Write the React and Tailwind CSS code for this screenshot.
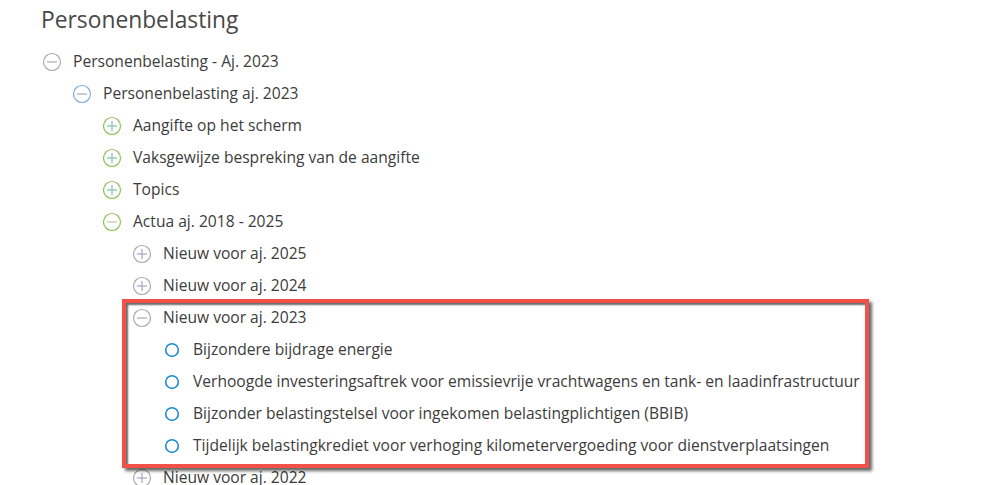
import React from "react";

function ToggleIcon({ type, color, lineColor }) {
  return (
    <svg width="20" height="20" viewBox="0 0 20 20" className="shrink-0">
      <circle cx="10" cy="10" r="8.5" fill="none" stroke={color} strokeWidth="1.2" />
      <line x1="5" y1="10" x2="15" y2="10" stroke={lineColor || color} strokeWidth="1.2" />
      {type === "plus" && (
        <line x1="10" y1="5" x2="10" y2="15" stroke={lineColor || color} strokeWidth="1.2" />
      )}
    </svg>
  );
}

function LeafIcon() {
  return (
    <svg width="20" height="20" viewBox="0 0 20 20" className="shrink-0">
      <circle cx="10" cy="10" r="6.3" fill="none" stroke="#1d8ad6" strokeWidth="1.6" />
    </svg>
  );
}

const indent = ["pl-[42px]", "pl-[72px]", "pl-[102px]", "pl-[132px]", "pl-[162px]"];

function Row({ level, icon, children }) {
  return (
    <div className={`h-8 flex items-center gap-[11px] ${indent[level]}`}>
      {icon}
      <span className="whitespace-nowrap">{children}</span>
    </div>
  );
}

const gray = "#a9a9a9";
const green = "#8cc152";

export default function App() {
  return (
    <div className="w-[1006px] h-[485px] overflow-hidden bg-white text-[#3c3c3c] font-['Open_Sans',sans-serif] text-[15.6px]">
      <h1 className="pl-[41px] pt-[4px] h-[46px] text-[22.8px] leading-[32px] text-[#484848]">
        Personenbelasting
      </h1>

      <Row level={0} icon={<ToggleIcon type="minus" color={gray} />}>
        Personenbelasting - Aj. 2023
      </Row>
      <Row level={1} icon={<ToggleIcon type="minus" color="#7ea7dc" lineColor="#a3abb6" />}>
        Personenbelasting aj. 2023
      </Row>
      <Row level={2} icon={<ToggleIcon type="plus" color={green} lineColor="#7fc2a0" />}>
        Aangifte op het scherm
      </Row>
      <Row level={2} icon={<ToggleIcon type="plus" color={green} lineColor="#7fc2a0" />}>
        Vaksgewijze bespreking van de aangifte
      </Row>
      <Row level={2} icon={<ToggleIcon type="plus" color={green} lineColor="#7fc2a0" />}>
        Topics
      </Row>
      <Row level={2} icon={<ToggleIcon type="minus" color={green} lineColor="#b9c89e" />}>
        Actua aj. 2018 - 2025
      </Row>
      <Row level={3} icon={<ToggleIcon type="plus" color={gray} lineColor="#9fa8c4" />}>
        Nieuw voor aj. 2025
      </Row>
      <Row level={3} icon={<ToggleIcon type="plus" color={gray} lineColor="#9fa8c4" />}>
        Nieuw voor aj. 2024
      </Row>

      {/* highlighted group */}
      <div className="relative">
        <Row level={3} icon={<ToggleIcon type="minus" color={gray} />}>
          Nieuw voor aj. 2023
        </Row>
        <Row level={4} icon={<LeafIcon />}>Bijzondere bijdrage energie</Row>
        <Row level={4} icon={<LeafIcon />}>
          Verhoogde investeringsaftrek voor emissievrije vrachtwagens en tank- en laadinfrastructuur
        </Row>
        <Row level={4} icon={<LeafIcon />}>
          Bijzonder belastingstelsel voor ingekomen belastingplichtigen (BBIB)
        </Row>
        <Row level={4} icon={<LeafIcon />}>
          Tijdelijk belastingkrediet voor verhoging kilometervergoeding voor dienstverplaatsingen
        </Row>
        <div className="absolute left-[122px] top-[-3px] w-[747px] h-[169px] border-4 border-[#f0524a] shadow-[3px_3px_3px_rgba(0,0,0,0.6),inset_2px_2px_2px_rgba(0,0,0,0.6)] pointer-events-none" />
      </div>

      <Row level={3} icon={<ToggleIcon type="plus" color={gray} lineColor="#9fa8c4" />}>
        Nieuw voor aj. 2022
      </Row>
    </div>
  );
}
